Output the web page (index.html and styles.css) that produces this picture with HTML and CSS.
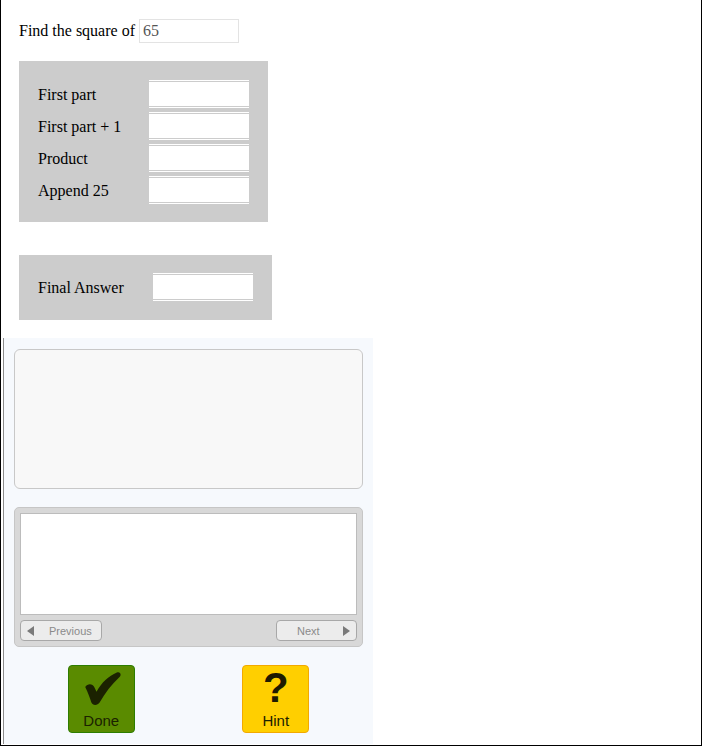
FILE: index.html
```html
<!DOCTYPE html>
<html>
<head>
<meta charset="utf-8">
<link rel="stylesheet" href="styles.css">
</head>
<body>
<div class="frame">
  <div class="question">Find the square of <input class="given" type="text" value="65"></div>

  <div class="work">
    <label class="lbl">First part</label><input class="cell" type="text">
    <label class="lbl">First part + 1</label><input class="cell" type="text">
    <label class="lbl">Product</label><input class="cell" type="text">
    <label class="lbl">Append 25</label><input class="cell" type="text">
  </div>

  <div class="final">
    <label class="lbl">Final Answer</label><input class="cell" type="text">
  </div>

  <div class="panel">
    <div class="msgbox"></div>
    <div class="hintbox">
      <div class="hintview"></div>
      <div class="navrow">
        <button class="nav prev"><span class="tri tri-left"></span><span class="navtxt">Previous</span></button>
        <button class="nav next"><span class="navtxt">Next</span><span class="tri tri-right"></span></button>
      </div>
    </div>
    <div class="actions">
      <div class="slot">
        <button class="act done">
          <svg class="check" width="37" height="33" viewBox="0 0 36 32"><path d="M1.2 14.5 C3.5 11 8.2 10.8 10.2 15 L12.2 19.2 C17 10.5 24 3.8 32 0.5 C35.2 -0.6 36.8 2.6 34.6 4.8 C27 11.8 20.6 20.2 15.2 29.6 C13.2 32.8 8.4 32.8 7.2 29.6 C5.6 25 3.8 19.6 1.2 14.5 Z" fill="#1b2200"/></svg>
          <span class="actlbl">Done</span>
        </button>
      </div>
      <div class="slot">
        <button class="act hint">
          <span class="qmark">?</span>
          <span class="actlbl">Hint</span>
        </button>
      </div>
    </div>
  </div>
</div>
</body>
</html>
```
FILE: styles.css
```css
html, body {
  margin: 0;
  padding: 0;
  background: #ffffff;
}
.frame {
  box-sizing: border-box;
  width: 702px;
  height: 746px;
  border: 1px solid #000;
  border-top: none;
  padding: 19px 18px 0 18px;
  font-family: "Liberation Serif", "Times New Roman", serif;
  font-size: 16px;
  color: #000;
}
.question {
  height: 24px;
  line-height: 24px;
  display: flex;
  align-items: center;
  gap: 4px;
}
.given {
  box-sizing: border-box;
  width: 100px;
  height: 24px;
  margin: 0;
  border: 1px solid #e3e3e3;
  padding: 0 3px;
  font-family: "Liberation Serif", serif;
  font-size: 16px;
  color: #555;
  background: #fff;
  outline: none;
}
.work, .final {
  background: #cccccc;
  display: grid;
  align-items: center;
  width: max-content;
}
.work {
  margin-top: 18px;
  grid-template-columns: 111px 100px;
  row-gap: 4px;
  padding: 19px 19px 18px 19px;
}
.final {
  margin-top: 33px;
  grid-template-columns: 115px 100px;
  padding: 18px 19px 19px 19px;
}
.lbl {
  line-height: 20px;
  padding-top: 2px;
}
.cell {
  box-sizing: border-box;
  width: 100px;
  height: 28px;
  margin: 0;
  padding: 0 3px;
  border: none;
  border-top: 3px double #ffffff;
  border-bottom: 3px double #ffffff;
  background: #ffffff;
  background-clip: padding-box;
  outline: none;
  font-size: 16px;
}
.panel {
  box-sizing: border-box;
  margin: 18px 0 0 -16px;
  width: 370px;
  height: 406px;
  border-left: 1px solid #8c8c8c;
  background: #f6f9fd;
  padding: 11px 10px 0 10px;
  font-family: "Liberation Sans", Arial, sans-serif;
}
.msgbox {
  box-sizing: border-box;
  height: 140px;
  border: 1px solid #c8c8c8;
  border-radius: 6px;
  background: #f8f8f8;
}
.hintbox {
  box-sizing: border-box;
  margin-top: 18px;
  height: 140px;
  border: 1px solid #c6c6c6;
  border-radius: 5px;
  background: #d8d8d8;
  padding: 5px;
  display: flex;
  flex-direction: column;
  gap: 5px;
}
.hintview {
  box-sizing: border-box;
  height: 103px;
  border: 1px solid #bcbcbc;
  background: #ffffff;
}
.navrow {
  display: flex;
  justify-content: space-between;
}
.nav {
  box-sizing: border-box;
  height: 21px;
  margin: 0;
  padding: 0 6px;
  border: 1px solid #a8a8a8;
  border-radius: 4px;
  background: #ececec;
  display: flex;
  align-items: center;
  font-family: "Liberation Sans", Arial, sans-serif;
  font-size: 11px;
  color: #8a8a8a;
}
.prev {
  width: 82px;
}
.next {
  width: 81px;
  justify-content: space-between;
  padding-left: 20px;
}
.prev .navtxt {
  margin-left: 15px;
}
.tri {
  width: 0;
  height: 0;
  border-top: 5px solid transparent;
  border-bottom: 5px solid transparent;
}
.tri-left {
  border-right: 7px solid #7a7a7a;
}
.tri-right {
  border-left: 7px solid #7a7a7a;
}
.actions {
  margin-top: 18px;
  display: grid;
  grid-template-columns: 1fr 1fr;
}
.slot {
  display: flex;
  justify-content: center;
}
.act {
  box-sizing: border-box;
  width: 67px;
  height: 68px;
  margin: 0;
  padding: 0;
  border-radius: 4px;
  display: flex;
  flex-direction: column;
  align-items: center;
  font-family: "Liberation Sans", Arial, sans-serif;
  color: #1b2200;
}
.done {
  background: #5a8b00;
  border: 1px solid #2e7d00;
  padding-top: 6px;
}
.check {
  display: block;
  margin-left: 2px;
}
.done .actlbl {
  margin-top: 7px;
}
.hint {
  background: #ffcf00;
  border: 1px solid #f2a900;
  padding-top: 2px;
}
.qmark {
  font-family: "Liberation Sans", Arial, sans-serif;
  font-weight: bold;
  font-size: 42px;
  line-height: 40px;
  color: #1e1a00;
}
.actlbl {
  font-size: 15px;
  line-height: 18px;
}
.hint .actlbl {
  margin-top: 4px;
}
```
